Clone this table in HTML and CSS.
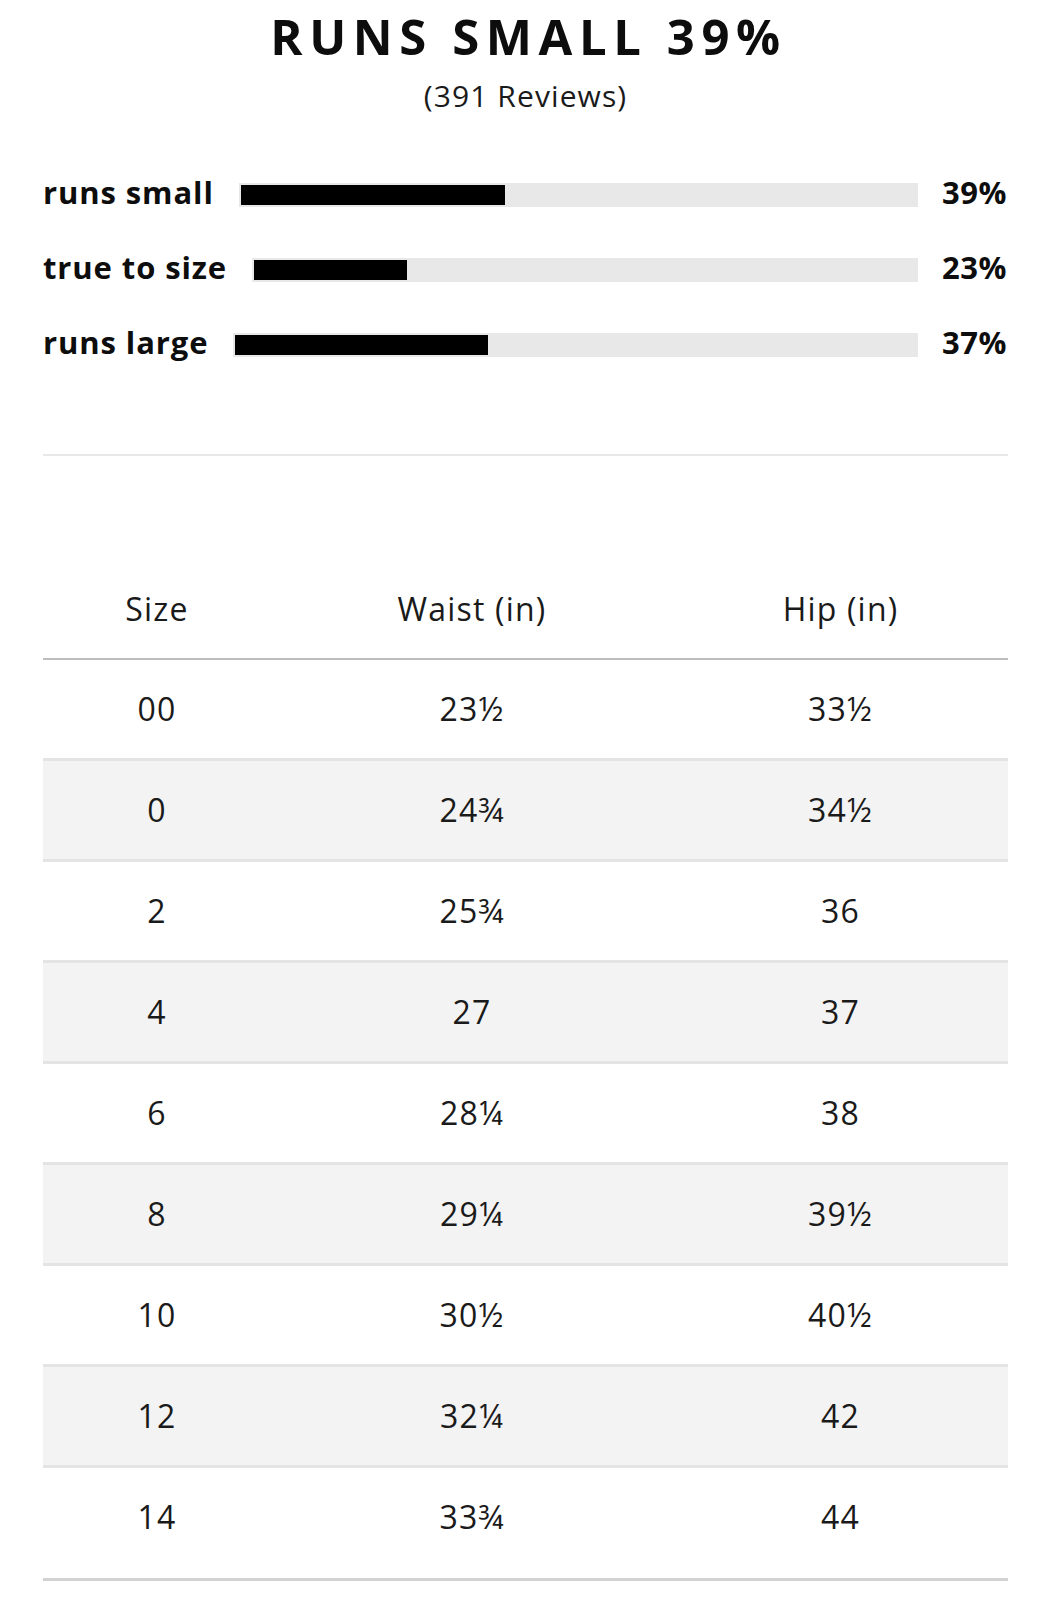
FILE: index.html
```html
<!DOCTYPE html>
<html lang="en">
<head>
<meta charset="utf-8">
<title>Fit &amp; Size Chart</title>
<link rel="stylesheet" href="styles.css">
</head>
<body>
<div class="page">
  <h1 class="title">RUNS SMALL 39%</h1>
  <p class="count">(391 Reviews)</p>

  <div class="fit">
    <div class="fit-row">
      <span class="fit-label">runs small</span>
      <div class="track"><div class="fill" style="width:39%"></div></div>
      <span class="pct">39%</span>
    </div>
    <div class="fit-row">
      <span class="fit-label">true to size</span>
      <div class="track"><div class="fill" style="width:23%"></div></div>
      <span class="pct">23%</span>
    </div>
    <div class="fit-row">
      <span class="fit-label">runs large</span>
      <div class="track"><div class="fill" style="width:37%"></div></div>
      <span class="pct">37%</span>
    </div>
  </div>

  <hr class="divider">

  <table class="size-table">
    <colgroup>
      <col class="c-size"><col class="c-waist"><col class="c-hip">
    </colgroup>
    <thead>
      <tr><th>Size</th><th>Waist (in)</th><th>Hip (in)</th></tr>
    </thead>
    <tbody>
      <tr><td>00</td><td>23½</td><td>33½</td></tr>
      <tr><td>0</td><td>24¾</td><td>34½</td></tr>
      <tr><td>2</td><td>25¾</td><td>36</td></tr>
      <tr><td>4</td><td>27</td><td>37</td></tr>
      <tr><td>6</td><td>28¼</td><td>38</td></tr>
      <tr><td>8</td><td>29¼</td><td>39½</td></tr>
      <tr><td>10</td><td>30½</td><td>40½</td></tr>
      <tr><td>12</td><td>32¼</td><td>42</td></tr>
      <tr><td>14</td><td>33¾</td><td>44</td></tr>
    </tbody>
  </table>
</div>
</body>
</html>
```

FILE: styles.css
```css
html, body {
  margin: 0;
  padding: 0;
  background: #ffffff;
}

body {
  font-family: "Open Sans", "DejaVu Sans", sans-serif;
  color: #111111;
}

.page {
  width: 965px;
  padding: 0 0 0 43px;
}

.title {
  margin: 6px 0 0;
  font-size: 49px;
  line-height: 60px;
  font-weight: 700;
  letter-spacing: 6.6px;
  text-align: center;
  padding-left: 6px;
  color: #0d0d0d;
}

.count {
  margin: 12px 0 0;
  font-size: 30px;
  line-height: 36px;
  font-weight: 400;
  letter-spacing: 1.1px;
  text-align: center;
  color: #1a1a1a;
}

.fit {
  margin-top: 69px;
  display: flex;
  flex-direction: column;
  gap: 51px;
}

.fit-row {
  display: flex;
  align-items: center;
  height: 24px;
}

.fit-label {
  font-size: 31px;
  line-height: 30px;
  font-weight: 700;
  letter-spacing: 0.9px;
  white-space: nowrap;
  color: #0d0d0d;
  margin-right: 25px;
  position: relative;
  top: -3px;
}

.track {
  flex: 1;
  height: 24px;
  background: #e8e8e8;
  padding: 2px 0 2px 2px;
  box-sizing: border-box;
}

.fill {
  height: 100%;
  background: #000000;
}

.pct {
  width: 66px;
  margin-left: 24px;
  font-size: 31px;
  line-height: 30px;
  font-weight: 700;
  letter-spacing: 0.5px;
  color: #0d0d0d;
  position: relative;
  top: -3px;
}

.divider {
  margin: 97px 0 0;
  border: 0;
  height: 2px;
  background: #e8e8e8;
}

.size-table {
  margin-top: 103px;
  width: 965px;
  border-collapse: collapse;
  table-layout: fixed;
  font-size: 32px;
  letter-spacing: 1.2px;
  color: #1a1a1a;
}

.c-size { width: 228px; }
.c-waist { width: 402px; }
.c-hip { width: 335px; }

.size-table th,
.size-table td {
  padding: 0;
  text-align: center;
  font-weight: 400;
  line-height: 98px;
}

.size-table th {
  line-height: 99px;
  border-bottom: 2px solid #bdbdbd;
}

.size-table td {
  border-bottom: 3px solid #e4e4e4;
}

.size-table tbody tr:nth-child(even) td {
  background: #f3f3f3;
}

.size-table tbody tr:last-child td {
  padding-bottom: 12px;
  border-bottom-color: #d2d2d2;
}
```
